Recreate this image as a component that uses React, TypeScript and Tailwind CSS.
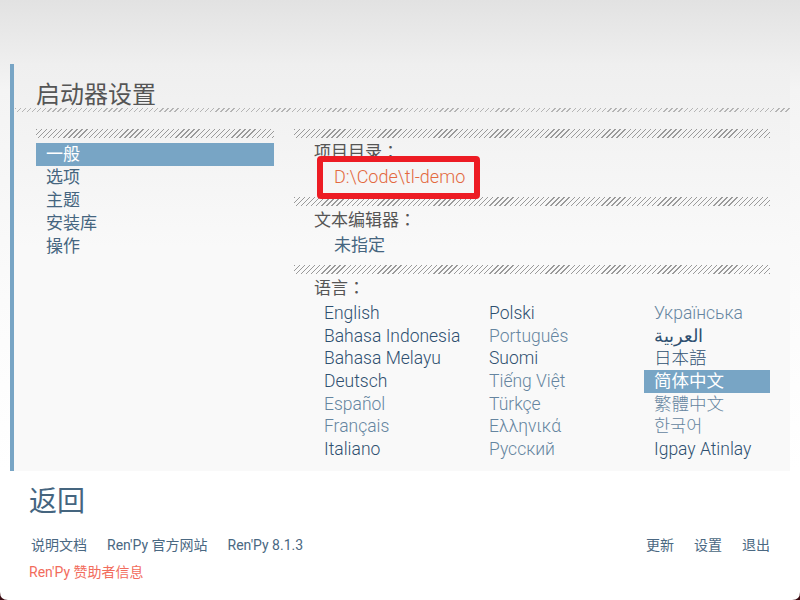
import React from 'react';

const hatch =
  'bg-[repeating-linear-gradient(135deg,#9a9a9a_0px,#9a9a9a_1px,transparent_1px,transparent_3.6px)]';

const navItems = ['一般', '选项', '主题', '安装库', '操作'];

type Lang = { name: string; dim?: boolean; selected?: boolean };

const languages: Lang[][] = [
  [
    { name: 'English' },
    { name: 'Bahasa Indonesia' },
    { name: 'Bahasa Melayu' },
    { name: 'Deutsch' },
    { name: 'Español', dim: true },
    { name: 'Français', dim: true },
    { name: 'Italiano' },
  ],
  [
    { name: 'Polski' },
    { name: 'Português', dim: true },
    { name: 'Suomi' },
    { name: 'Tiếng Việt', dim: true },
    { name: 'Türkçe', dim: true },
    { name: 'Ελληνικά', dim: true },
    { name: 'Русский', dim: true },
  ],
  [
    { name: 'Українська', dim: true },
    { name: 'العربية' },
    { name: '日本語' },
    { name: '简体中文', selected: true },
    { name: '繁體中文', dim: true },
    { name: '한국어', dim: true },
    { name: 'Igpay Atinlay' },
  ],
];

// centred full-width colon, as the launcher font draws it
const Colon = () => <span className="font-['Noto_Sans_CJK_TC',sans-serif] leading-[0]">：</span>;

const Corner = ({ side }: { side: 'left' | 'right' }) => (
  <svg
    width="8"
    height="8"
    viewBox="0 0 8 8"
    className={side === 'left' ? 'absolute bottom-0 left-0' : 'absolute bottom-0 right-0'}
  >
    {side === 'left' ? (
      <path d="M0 0 Q0 8 8 8 L0 8 Z" fill="#3a0c12" />
    ) : (
      <path d="M8 0 Q8 8 0 8 L8 8 Z" fill="#3a0c12" />
    )}
  </svg>
);

export default function App() {
  return (
    <div className="relative w-[800px] h-[600px] overflow-hidden bg-[linear-gradient(#e2e2e2_0px,#f4f4f4_90px,#fbfbfb_300px,#ffffff_470px)] font-[Roboto,'Noto_Sans_CJK_SC',sans-serif]">
      <div className="h-[64px]" />

      {/* main panel */}
      <div className="ml-[10px] w-[780px] h-[407px] flex bg-[linear-gradient(#efefef,#f9f9f9_45%,#f9f9f9)]">
        <div className="w-[4px] bg-[#78a5c5]" />
        <div className="flex-1 flex flex-col">
          <div className="pt-[18px] pl-[22px] text-[24px] leading-[26px] text-[#555555]">启动器设置</div>
          <div className={`h-[4px] ml-[1px] ${hatch} opacity-70`} />

          <div className="flex mt-[17px] pl-[22px] gap-[20px]">
            {/* left nav */}
            <div className="w-[238px]">
              <div className={`h-[9px] ${hatch}`} />
              <div className="mt-[5px] flex flex-col">
                {navItems.map((item, i) => (
                  <div
                    key={item}
                    className={
                      i === 0
                        ? 'h-[23px] pl-[10px] text-[17px] leading-[23px] bg-[#78a5c5] text-white'
                        : 'h-[23px] pl-[10px] text-[17px] leading-[23px] text-[#45657f]'
                    }
                  >
                    {item}
                  </div>
                ))}
              </div>
            </div>

            {/* right settings */}
            <div className="w-[476px]">
              <div className={`h-[9px] ${hatch}`} />
              <div className="h-[26px] pt-[2px] pl-[20px] text-[17px] leading-[24px] text-[#555555]">
                项目目录<Colon />
              </div>
              <div className="relative h-[26px] pl-[40px] text-[18px] leading-[26px] font-light text-[#e3693e] mb-[7px]">
                {'D:\\Code\\tl-demo'}
                <div className="absolute left-[23px] top-[-8px] w-[163px] h-[43px] border-[6px] border-[#ed1c24] rounded-[4px]" />
              </div>

              <div className={`h-[9px] ${hatch}`} />
              <div className="h-[26px] pt-[2px] pl-[20px] text-[17px] leading-[24px] text-[#555555]">
                文本编辑器<Colon />
              </div>
              <div className="h-[26px] pl-[40px] text-[17px] leading-[26px] text-[#45657f] mb-[7px]">未指定</div>

              <div className={`h-[9px] ${hatch}`} />
              <div className="h-[26px] pt-[2px] pl-[20px] text-[17px] leading-[24px] text-[#555555]">
                语言<Colon />
              </div>
              <div className="mt-[2px] pl-[20px] grid grid-cols-[165px_165px_126px]">
                {languages.map((col, ci) => (
                  <div key={ci} className="flex flex-col">
                    {col.map((lang) => (
                      <div
                        key={lang.name}
                        className={
                          lang.selected
                            ? 'h-[22.7px] pl-[10px] text-[17.5px] leading-[22.7px] whitespace-nowrap bg-[#78a5c5] text-white'
                            : lang.dim
                              ? 'h-[22.7px] pl-[10px] text-[17.5px] leading-[22.7px] whitespace-nowrap font-light text-[#6585a0]'
                              : 'h-[22.7px] pl-[10px] text-[17.5px] leading-[22.7px] whitespace-nowrap font-light text-[#2f5070]'
                        }
                      >
                        {lang.name}
                      </div>
                    ))}
                  </div>
                ))}
              </div>
            </div>
          </div>
        </div>
      </div>

      {/* footer */}
      <div className="pl-[29px] pr-[30px]">
        <div className="mt-[15px] text-[28px] leading-[32px] text-[#45657f]">返回</div>
        <div className="mt-[17px] flex items-center justify-between text-[14px] leading-[20px] text-[#4a6882]">
          <div className="flex gap-[20px] pl-[2px]">
            <span>说明文档</span>
            <span>Ren'Py 官方网站</span>
            <span>Ren'Py 8.1.3</span>
          </div>
          <div className="flex gap-[20px]">
            <span>更新</span>
            <span>设置</span>
            <span>退出</span>
          </div>
        </div>
        <div className="mt-[7px] text-[14px] leading-[20px] text-[#f26c5c]">Ren'Py 赞助者信息</div>
      </div>

      <Corner side="left" />
      <Corner side="right" />
    </div>
  );
}
